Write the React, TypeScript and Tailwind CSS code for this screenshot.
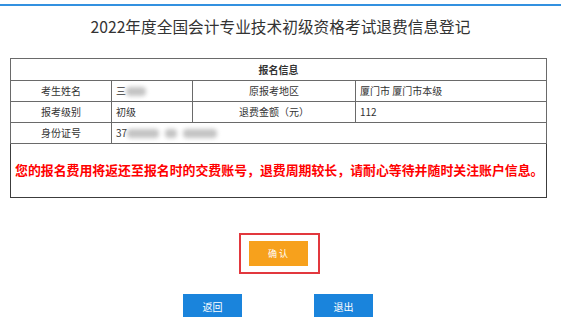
import React from "react";

const Blur = ({ w }: { w: number }) => (
  <span
    className="inline-block h-[9px] bg-[#c4c4c4] blur-[2px] align-middle rounded-sm"
    style={{ width: w }}
  />
);

export default function App() {
  const cell = "border border-[#6a6a6a] text-[10px] text-[#333] leading-none";
  return (
    <div className="w-[561px] h-[317px] bg-white overflow-hidden font-['Noto_Sans_CJK_SC','Noto_Sans',sans-serif]">
      <div className="h-[4px]" />
      <div className="h-[2px] bg-[#3391e0]" />
      <h1 className="mt-[9px] h-[24px] leading-[24px] text-center text-[15.7px] text-[#333]">
        2022年度全国会计专业技术初级资格考试退费信息登记
      </h1>
      <table className="mt-[19px] ml-[10px] w-[536px] border-collapse table-fixed border border-[#3c3c3c]">
        <colgroup>
          <col className="w-[101px]" />
          <col className="w-[81px]" />
          <col className="w-[163px]" />
          <col className="w-[191px]" />
        </colgroup>
        <tbody>
          <tr className="h-[22px]">
            <td colSpan={4} className={`${cell} text-center font-bold`}>
              报名信息
            </td>
          </tr>
          <tr className="h-[21px]">
            <td className={`${cell} text-center`}>考生姓名</td>
            <td className={`${cell} pl-[4px]`}>
              <span className="align-middle">三</span>
              <Blur w={20} />
            </td>
            <td className={`${cell} text-center`}>原报考地区</td>
            <td className={`${cell} pl-[4px]`}>厦门市 厦门市本级</td>
          </tr>
          <tr className="h-[21px]">
            <td className={`${cell} text-center`}>报考级别</td>
            <td className={`${cell} pl-[4px]`}>初级</td>
            <td className={`${cell} text-center`}>退费金额（元）</td>
            <td className={`${cell} pl-[4px]`}>112</td>
          </tr>
          <tr className="h-[21px]">
            <td className={`${cell} text-center`}>身份证号</td>
            <td colSpan={3} className={`${cell} pl-[4px]`}>
              <span className="align-middle">37</span>
              <span className="inline-flex items-center gap-[6px] align-middle">
                <Blur w={32} />
                <Blur w={12} />
                <Blur w={34} />
              </span>
            </td>
          </tr>
          <tr className="h-[54px]">
            <td
              colSpan={4}
              className="border border-[#3c3c3c] pl-[4px] text-[12.9px] font-bold text-[#ff0000] leading-none whitespace-nowrap"
            >
              您的报名费用将返还至报名时的交费账号，退费周期较长，请耐心等待并随时关注账户信息。
            </td>
          </tr>
        </tbody>
      </table>
      <div className="ml-[10px] w-[536px] mt-[40px] flex justify-center">
        <div className="relative">
          <button className="w-[59px] h-[25px] bg-[#f7a11c] text-white text-[9px] leading-none">
            确 认
          </button>
          <div className="absolute left-[-10px] top-[-5px] right-[-12px] bottom-[-8px] border-2 border-[#e2383e]" />
        </div>
      </div>
      <div className="ml-[10px] w-[536px] mt-[28px] flex justify-center gap-[72px]">
        <button className="w-[59px] h-[25px] bg-[#1a84dc] text-white text-[10px] leading-none">
          返回
        </button>
        <button className="w-[59px] h-[25px] bg-[#1a84dc] text-white text-[10px] leading-none">
          退出
        </button>
      </div>
    </div>
  );
}
